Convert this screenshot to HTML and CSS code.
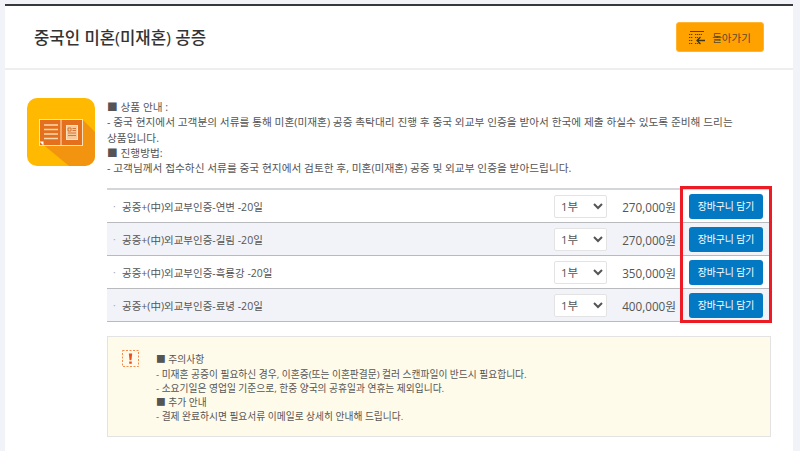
FILE: index.html
```html
<!DOCTYPE html>
<html>
<head>
    <title>중국인 미혼(미재혼) 공증</title>
    <link rel="stylesheet" href="styles.css">
</head>
<body>
    <div class="panel">
        <div class="panel-head">
            <h1>중국인 미혼(미재혼) 공증</h1>
            <a class="back-btn" href="#">
                <svg class="back-icon" width="16" height="15" viewBox="0 0 16 15">
                    <path d="M1 1.500H15" fill="none" stroke="#4f4426" stroke-width="1"/>
                    <path d="M0 4.500h4M6 4.500h7M0 7.500h4M6 7.500h3M0 10.500h4M0 13.500h4M6 13.500h5" fill="none" stroke="#4f4426" stroke-width="1" stroke-dasharray="1.300 .7"/>
                    <path d="M16 10.500H8M11.500 7l-3.500 3.500 3.500 3.500" fill="none" stroke="#3f3820" stroke-width="1.300"/>
                </svg>
                돌아가기
            </a>
        </div>
        <div class="panel-body">
            <div class="product-icon">
                <svg width="68" height="68" viewBox="0 0 68 68">
                    <rect width="68" height="68" rx="10" fill="#ffb900"/>
                    <path d="M56 22L68 34V58a10 10 0 0 1-10 10H42L13 44z" fill="#f39410"/>
                    <rect x="12.500" y="21.500" width="43" height="26" fill="#e46f1c" stroke="#fde3c0"/>
                    <path d="M34 21.500V47.500" stroke="#fde3c0"/>
                    <path d="M17 27h14M17 31.500h14M17 36h14M17 40.500h14" stroke="#fbd9b0" stroke-width="1.500"/>
                    <rect x="39.500" y="27.500" width="11" height="14" fill="#f8c79a" stroke="#fde3c0"/>
                    <path d="M41 30h3v3h-3zM45.500 30.500h3.500M45.500 32.500h3.500M41 35h8M41 37.500h8" fill="none" stroke="#c9651c" stroke-width=".8"/>
                    <path d="M12.500 43.500h4v4z" fill="#fff"/>
                </svg>
            </div>
            <div class="product-main">
                <div class="intro">
                    <p>■ 상품 안내 :</p>
                    <p>- 중국 현지에서 고객분의 서류를 통해 미혼(미재혼) 공증 촉탁대리 진행 후 중국 외교부 인증을 받아서 한국에 제출 하실수 있도록 준비해 드리는 상품입니다.</p>
                    <p>■ 진행방법:</p>
                    <p>- 고객님께서 접수하신 서류를 중국 현지에서 검토한 후, 미혼(미재혼) 공증 및 외교부 인증을 받아드립니다.</p>
                </div>
                <div class="items">
                    <div class="item">
                        <span class="item-name">공증+(中)외교부인증-연변 -20일</span>
                        <select class="item-qty"><option>1부</option></select>
                        <span class="item-price">270,000원</span>
                        <button class="cart-btn">장바구니 담기</button>
                    </div>
                    <div class="item">
                        <span class="item-name">공증+(中)외교부인증-길림 -20일</span>
                        <select class="item-qty"><option>1부</option></select>
                        <span class="item-price">270,000원</span>
                        <button class="cart-btn">장바구니 담기</button>
                    </div>
                    <div class="item">
                        <span class="item-name">공증+(中)외교부인증-흑룡강 -20일</span>
                        <select class="item-qty"><option>1부</option></select>
                        <span class="item-price">350,000원</span>
                        <button class="cart-btn">장바구니 담기</button>
                    </div>
                    <div class="item">
                        <span class="item-name">공증+(中)외교부인증-료녕 -20일</span>
                        <select class="item-qty"><option>1부</option></select>
                        <span class="item-price">400,000원</span>
                        <button class="cart-btn">장바구니 담기</button>
                    </div>
                    <div class="red-mark"></div>
                </div>
                <div class="notice">
                    <svg class="notice-icon" width="17" height="17" viewBox="0 0 17 17">
                        <rect x=".5" y=".5" width="16" height="16" fill="none" stroke="#f58b4c" stroke-dasharray="2 1.500"/>
                        <path d="M6.800 3.500h3.400l-.8 6.800h-1.800zM7.200 11.500h2.600v2.300h-2.600z" fill="#e9501c"/>
                    </svg>
                    <div class="notice-text">
                        <p>■ 주의사항</p>
                        <p>- 미재혼 공증이 필요하신 경우, 이혼증(또는 이혼판결문) 컬러 스캔파일이 반드시 필요합니다.</p>
                        <p>- 소요기일은 영업일 기준으로, 한중 양국의 공휴일과 연휴는 제외입니다.</p>
                        <p>■ 추가 안내</p>
                        <p>- 결제 완료하시면 필요서류 이메일로 상세히 안내해 드립니다.</p>
                    </div>
                </div>
            </div>
        </div>
    </div>
</body>
</html>
```

FILE: styles.css
```css
html, body {
    height: 100%;
}

body {
    margin: 0;
    padding: 4px 7px 0 5px;
    box-sizing: border-box;
    overflow: hidden;
    background-color: #f1f3f9;
    font-family: "Open Sans", "Noto Sans CJK KR", sans-serif;
    color: #555;
}

p {
    margin: 0;
}

.panel {
    background-color: #fff;
    border-top: 2px solid #343a40;
    min-height: 460px;
}

.panel-head {
    display: flex;
    align-items: center;
    justify-content: space-between;
    height: 62px;
    padding: 0 29px;
    border-bottom: 2px solid #eee;
}

h1 {
    margin: 0;
    font-size: 16.700px;
    font-weight: 500;
    color: #333;
}

.back-btn {
    display: flex;
    align-items: center;
    justify-content: center;
    gap: 7px;
    width: 88px;
    height: 30px;
    box-sizing: border-box;
    background-color: #ffa200;
    border: 1px solid #ffb533;
    border-radius: 3px;
    font-size: 10.500px;
    color: #5a4a2a;
    text-decoration: none;
}

.panel-body {
    display: flex;
    align-items: flex-start;
    gap: 12px;
    padding: 28px 22px 0;
}

.product-icon {
    flex: none;
    width: 68px;
    height: 68px;
}

.product-main {
    flex: 1;
    min-width: 0;
}

.intro {
    padding-top: 2px;
    padding-right: 30px;
    font-size: 10.700px;
    line-height: 15.250px;
}

.items {
    position: relative;
    margin-top: 12px;
    border-top: 2px solid #d5d6da;
}

.item {
    display: flex;
    align-items: center;
    height: 32px;
    border-bottom: 1px solid #b9babd;
    font-size: 10.500px;
}

.item:nth-child(even) {
    background-color: #f1f3f8;
}

.item-name {
    flex: 1;
    padding-left: 15px;
    position: relative;
}

.item-name::before {
    content: "·";
    position: absolute;
    left: 6px;
    color: #aaa;
}

.item-qty {
    width: 53px;
    height: 23px;
    padding: 0 0 0 2px;
    background-color: #fff;
    border: 1px solid #e3e3e3;
    border-radius: 2px;
    font-family: inherit;
    font-size: 11.500px;
    color: #555;
}

.item-price {
    width: 69px;
    text-align: right;
    font-size: 11.700px;
}

.cart-btn {
    width: 74px;
    height: 25px;
    margin: 0 8px 0 13px;
    padding: 0;
    background-color: #0379c4;
    border: none;
    border-radius: 3px;
    font-family: inherit;
    font-size: 9.800px;
    color: #fff;
    cursor: pointer;
}

.red-mark {
    position: absolute;
    top: -4px;
    right: -1px;
    width: 86px;
    height: 131px;
    border: 3px solid #ed1c24;
    pointer-events: none;
}

.notice {
    display: flex;
    gap: 16px;
    margin-top: 14px;
    height: 101px;
    box-sizing: border-box;
    padding: 13px 14px;
    background-color: #fffbea;
    border: 1px solid #e3e3e3;
    font-size: 9.740px;
    line-height: 14.300px;
}

.notice-icon {
    flex: none;
}

.notice-text {
    padding-top: 3px;
    margin-left: 1px;
}
```
